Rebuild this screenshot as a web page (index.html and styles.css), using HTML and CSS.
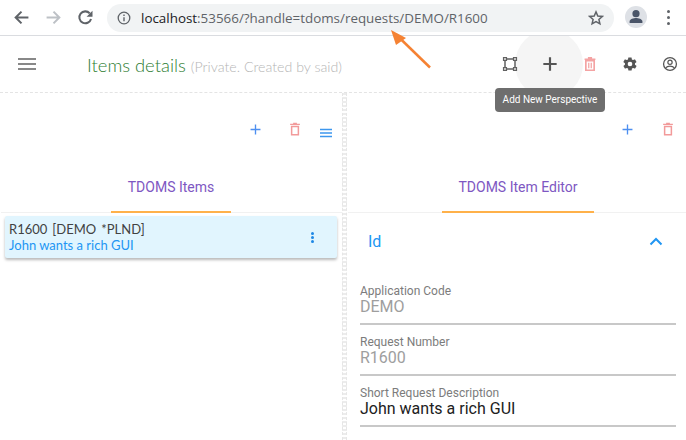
FILE: index.html
```html
<!DOCTYPE html>
<html lang="en">
<head>
<meta charset="utf-8">
<title>Items details</title>
<link rel="stylesheet" href="styles.css">
</head>
<body>
<header class="chrome">
  <svg class="nav-ico" viewBox="0 0 16 16"><path d="M14.500 8H3M8 2.500 2.500 8 8 13.500" fill="none" stroke="#5f6368" stroke-width="1.900"/></svg>
  <svg class="nav-ico" viewBox="0 0 16 16"><path d="M1.500 8H13M8 2.500 13.500 8 8 13.500" fill="none" stroke="#bdc1c6" stroke-width="1.900"/></svg>
  <svg class="nav-ico" viewBox="0 0 16 16"><path d="M13.200 9.400A5.600 5.600 0 1 1 12 4.100" fill="none" stroke="#5f6368" stroke-width="1.900"/><path d="M14.600 1.600v5.600H9z" fill="#5f6368"/></svg>
  <div class="omnibox">
    <svg class="info-ico" viewBox="0 0 14 14"><circle cx="7" cy="7" r="5.800" fill="none" stroke="#5f6368" stroke-width="1.300"/><path d="M6.300 6.200h1.400v4H6.300zM6.300 3.600h1.400V5H6.300z" fill="#5f6368"/></svg>
    <span class="url"><span class="url-host">localhost</span>:53566/?handle=tdoms/requests/DEMO/R1600</span>
    <svg class="star-ico" viewBox="0 0 16 16"><path d="M8 1.900 9.800 6l4.500.4-3.400 3 1 4.400L8 11.500l-3.900 2.300 1-4.400-3.400-3L6.200 6z" fill="none" stroke="#5f6368" stroke-width="1.500"/></svg>
  </div>
  <div class="avatar"><svg viewBox="0 0 22 22" width="22" height="22"><circle cx="11" cy="7.700" r="3.600" fill="#4a5568"/><path d="M4.600 17v-1.600c0-2.200 4.200-3.400 6.400-3.400s6.400 1.200 6.400 3.400V17z" fill="#4a5568"/></svg></div>
  <div class="dots"><i></i><i></i><i></i></div>
</header>

<section class="toolbar">
  <svg class="menu-ico" viewBox="0 0 18 12"><path d="M0 1h18M0 6h18M0 11h18" stroke="#616161" stroke-width="1.600"/></svg>
  <h1 class="title">Items details <small class="subtitle">(Private. Created by said)</small></h1>
  <div class="tools">
    <span class="hover-circle"></span>
    <svg class="tool" viewBox="0 0 24 24"><path d="M6 6h12v12H6z" fill="none" stroke="#616161" stroke-width="1.800"/><path d="M3.500 3.500h5v5h-5zM15.500 3.500h5v5h-5zM3.500 15.500h5v5h-5zM15.500 15.500h5v5h-5z" fill="#616161"/><path d="M5 5h2v2H5zM17 5h2v2h-2zM5 17h2v2H5zM17 17h2v2h-2z" fill="#fff"/></svg>
    <svg class="tool" viewBox="0 0 24 24"><path d="M12 4v16M4 12h16" stroke="#555" stroke-width="2.600"/></svg>
    <svg class="tool" viewBox="0 0 24 24"><path d="M7 8h10v11.500H7z" fill="none" stroke="#f4a3a3" stroke-width="2"/><path d="M10.500 10.500v6.500M13.500 10.500v6.500" stroke="#f4a3a3" stroke-width="1.500"/><path d="M5.500 5.500h13v1.800h-13zM9.500 3.500h5v2h-5z" fill="#f4a3a3"/></svg>
    <svg class="tool" viewBox="-3 -3 30 30"><path fill="#555" d="M19.400 13c0-.3.100-.6.100-1s0-.7-.1-1l2.100-1.600c.2-.2.200-.4.100-.6l-2-3.500c-.1-.2-.4-.3-.6-.2l-2.500 1c-.5-.4-1.100-.7-1.700-1l-.4-2.600c0-.2-.2-.4-.5-.4h-4c-.2 0-.4.200-.5.400l-.4 2.600c-.6.300-1.200.6-1.700 1l-2.500-1c-.2-.1-.5 0-.6.200l-2 3.500c-.1.200-.1.400.1.600L4.500 11c0 .3-.1.700-.1 1s0 .7.100 1l-2.100 1.600c-.2.200-.2.400-.1.600l2 3.500c.1.200.4.300.6.200l2.500-1c.5.400 1.100.7 1.700 1l.4 2.600c0 .2.300.4.500.4h4c.3 0 .5-.2.500-.4l.4-2.600c.6-.3 1.200-.6 1.700-1l2.500 1c.2.100.5 0 .6-.2l2-3.500c.1-.2.100-.4-.1-.6zM12 15.500a3.500 3.500 0 1 1 0-7 3.500 3.500 0 0 1 0 7z"/></svg>
    <svg class="tool" viewBox="-2 -2 28 28"><circle cx="12" cy="12" r="9" fill="none" stroke="#555" stroke-width="1.800"/><circle cx="12" cy="9.500" r="3" fill="none" stroke="#555" stroke-width="1.700"/><path d="M6 17.500c1.500-2 4-2.500 6-2.500s4.500.5 6 2.500" fill="none" stroke="#555" stroke-width="1.700"/></svg>
  </div>
</section>

<main class="panes">
  <section class="pane pane-left">
    <div class="actions">
      <svg class="act-add" viewBox="0 0 24 24"><path d="M12 5v14M5 12h14" stroke="#4d8ff0" stroke-width="1.900"/></svg>
      <svg class="act-del" viewBox="0 0 24 24"><path d="M7.500 8.500h9v11h-9z" fill="none" stroke="#f29a9a" stroke-width="2"/><path d="M5.500 5h13v1.800h-13zM9.500 3.500h5V5h-5z" fill="#f29a9a"/></svg>
      <svg class="act-menu" viewBox="0 0 14 10"><path d="M1 1.500h12M1 5h12M1 8.500h12" stroke="#3d97ee" stroke-width="1.500"/></svg>
    </div>
    <div class="tabs"><div class="tab tab-items">TDOMS Items</div></div>
    <article class="item">
      <div class="item-text">
        <div class="item-code">R1600 &nbsp;[DEMO &nbsp;*PLND]</div>
        <div class="item-name">John wants a rich GUI</div>
      </div>
      <div class="item-dots"><i></i><i></i><i></i></div>
    </article>
  </section>
  <div class="splitter"></div>
  <section class="pane pane-right">
    <div class="actions actions-right">
      <svg class="act-add" viewBox="0 0 24 24"><path d="M12 5v14M5 12h14" stroke="#4d8ff0" stroke-width="1.900"/></svg>
      <svg class="act-del" viewBox="0 0 24 24"><path d="M7.500 8.500h9v11h-9z" fill="none" stroke="#f29a9a" stroke-width="2"/><path d="M5.500 5h13v1.800h-13zM9.500 3.500h5V5h-5z" fill="#f29a9a"/></svg>
    </div>
    <div class="tabs"><div class="tab tab-editor">TDOMS Item Editor</div></div>
    <div class="group-head">
      <span class="group-title">Id</span>
      <svg class="chev" viewBox="0 0 14 9"><path d="M1.500 7.500 7 2l5.500 5.500" fill="none" stroke="#2196f3" stroke-width="2"/></svg>
    </div>
    <form class="fields">
      <div class="field"><label>Application Code</label><div class="val val-off">DEMO</div></div>
      <div class="field"><label>Request Number</label><div class="val val-off">R1600</div></div>
      <div class="field"><label>Short Request Description</label><div class="val">John wants a rich GUI</div></div>
    </form>
  </section>
</main>

<div class="tooltip">Add New Perspective</div>
<svg class="arrow" viewBox="0 0 40 40"><path d="M39 37.500 5 4.500" stroke="#f58233" stroke-width="2.500" fill="none"/><path d="M0 0 15 8 5 15z" fill="#f58233"/></svg>
</body>
</html>
```

FILE: styles.css
```css
* { box-sizing: border-box; }
html, body { margin: 0; padding: 0; }
body {
  width: 686px;
  height: 440px;
  overflow: hidden;
  background: #fff;
  font-family: Roboto, "Liberation Sans", sans-serif;
  position: relative;
}

/* browser bar */
.chrome {
  height: 36px;
  display: flex;
  align-items: center;
  padding: 0 0 1px 13px;
  border-bottom: 1px solid #dadce0;
  background: #fff;
  position: relative;
  z-index: 1;
}
.nav-ico { width: 17px; height: 17px; margin-right: 15px; flex: none; }
.nav-ico:nth-child(3) { margin-right: 13px; }
.omnibox {
  width: 507px;
  height: 28px;
  margin-top: 1px;
  background: #f1f3f4;
  border-radius: 14px;
  display: flex;
  align-items: center;
  padding: 0 10px;
  flex: none;
}
.info-ico { width: 14px; height: 14px; margin-right: 10px; flex: none; }
.url { font: 13.400px "Open Sans", "Liberation Sans", sans-serif; color: #5f6368; white-space: nowrap; flex: 1; }
.url-host { color: #202124; }
.star-ico { width: 16px; height: 16px; flex: none; }
.avatar {
  width: 22px;
  height: 22px;
  margin-left: 11px;
  border-radius: 50%;
  background: #dee1e6;
  flex: none;
}
.avatar svg { display: block; }
.dots { margin-left: 20px; display: flex; flex-direction: column; gap: 3px; }
.dots i { display: block; width: 3px; height: 3px; background: #5f6368; border-radius: 50%; }

/* app toolbar */
.toolbar {
  height: 57px;
  display: flex;
  align-items: center;
  padding: 0 6px 0 18px;
  border-bottom: 1px dashed #e4e4e4;
  position: relative;
}
.menu-ico { width: 18px; height: 12px; flex: none; }
.title {
  margin: 2px 0 0 51px;
  font: 300 18.400px Lato, sans-serif;
  color: #2e7d32;
  white-space: nowrap;
  flex: 1;
}
.subtitle { font-size: 14.200px; color: #b5b5b5; }
.tools { display: flex; align-items: center; gap: 20px; position: relative; }
.tool { width: 20px; height: 20px; flex: none; position: relative; }
.hover-circle {
  position: absolute;
  left: 15px;
  top: -24px;
  width: 68px;
  height: 68px;
  border-radius: 50%;
  background: #f5f5f5;
}

/* panes */
.panes { display: flex; height: 347px; }
.pane { min-width: 0; display: flex; flex-direction: column; }
.pane-left { width: 342px; flex: none; }
.pane-right { flex: 1; }
.splitter {
  width: 5px;
  flex: none;
  background: repeating-linear-gradient(180deg, #ececec 0 2px, #fff 2px 4px);
  border-left: 1px dashed #e6e6e6;
  border-right: 1px dashed #e6e6e6;
}
.actions {
  height: 78px;
  position: relative;
}
.act-add { width: 17px; height: 17px; position: absolute; top: 28px; left: 247px; }
.act-del { width: 18px; height: 18px; position: absolute; top: 27px; left: 286px; }
.act-menu { position: absolute; left: 319px; top: 35px; width: 14px; height: 10px; }
.actions-right .act-add { left: 272px; }
.actions-right .act-del { left: 312px; }

.tabs {
  height: 42px;
  margin-left: 1px;
  border-bottom: 1px solid #f1f1f1;
  position: relative;
}
.tab {
  position: absolute;
  top: 0;
  height: 42px;
  text-align: center;
  font-size: 14px;
  line-height: 33px;
  color: #7e57c2;
  border-bottom: 2px solid #ffb14a;
}
.tab-items { left: 110px; width: 120px; }
.tab-editor { left: 94px; width: 152px; }

/* list item */
.item {
  margin: 3px 5px 0 5px;
  height: 42px;
  background: #e1f5fe;
  border-radius: 2px;
  box-shadow: 0 2px 3px rgba(0,0,0,.28);
  display: flex;
  align-items: center;
  padding: 0 23px 0 4px;
}
.item-text { flex: 1; font: 13px/16.500px Lato, sans-serif; }
.item-code { color: #424242; word-spacing: -.8px; }
.item-name { color: #2196f3; }
.item-dots { display: flex; flex-direction: column; gap: 1px; }
.item-dots i { display: block; width: 3px; height: 3px; background: #1e88e5; border-radius: 50%; }

/* editor */
.group-head {
  height: 56px;
  display: flex;
  align-items: center;
  justify-content: space-between;
  padding: 0 23px 0 21px;
}
.group-title { font-size: 16px; color: #2196f3; }
.chev { width: 14px; height: 9px; }
.fields { padding: 0 10px 0 13px; margin: 0; }
.field {
  height: 51px;
  border-bottom: 2px solid #c8c8c8;
  padding-top: 10px;
}
.field:first-child { height: 56px; padding-top: 15px; }
.field label { display: block; font-size: 12px; line-height: 14px; color: #7c7c7c; }
.val { font-size: 16px; line-height: 18px; color: #212121; }
.val-off { color: #9e9e9e; }

/* overlays */
.tooltip {
  position: absolute;
  left: 495px;
  top: 88px;
  width: 110px;
  height: 24px;
  border-radius: 4px;
  background: #6e6e6e;
  color: #fff;
  font-size: 10px;
  line-height: 24px;
  text-align: center;
  white-space: nowrap;
}
.arrow {
  position: absolute;
  left: 391px;
  top: 30px;
  width: 40px;
  height: 40px;
  z-index: 2;
}
```
